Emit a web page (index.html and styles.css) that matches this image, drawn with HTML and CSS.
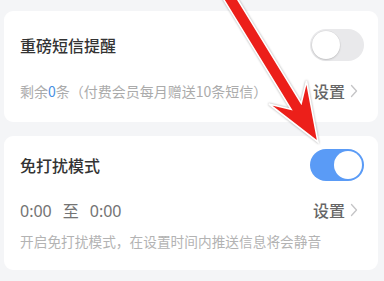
FILE: index.html
```html
<!DOCTYPE html>
<html lang="zh-CN">
<head>
<meta charset="utf-8">
<title>提醒设置</title>
<link rel="stylesheet" href="styles.css">
</head>
<body>
<div class="page">
  <section class="card card-sms">
    <div class="row head">
      <span class="title">重磅短信提醒</span>
      <span class="switch"><span class="knob"></span></span>
    </div>
    <div class="row sub">
      <span class="note">剩余<em class="num">0</em>条（付费会员每月赠送10条短信）</span>
      <span class="link">设置<svg class="chev" width="8" height="14" viewBox="0 0 8 14"><path d="M1.5 1.5 L6.5 7 L1.5 12.5" fill="none" stroke="#c4c4c6" stroke-width="1.3" stroke-linecap="round" stroke-linejoin="round"/></svg></span>
    </div>
  </section>
  <section class="card card-dnd">
    <div class="row head">
      <span class="title">免打扰模式</span>
      <span class="switch on"><span class="knob"></span></span>
    </div>
    <div class="row sub">
      <span class="time">0:00<span class="to">至</span>0:00</span>
      <span class="link">设置<svg class="chev" width="8" height="14" viewBox="0 0 8 14"><path d="M1.5 1.5 L6.5 7 L1.5 12.5" fill="none" stroke="#c4c4c6" stroke-width="1.3" stroke-linecap="round" stroke-linejoin="round"/></svg></span>
    </div>
    <p class="desc">开启免打扰模式，在设置时间内推送信息将会静音</p>
  </section>
  <svg class="arrow" width="384" height="281" viewBox="0 0 384 281">
    <polygon points="232.4,-9.1 301.2,103.1 306.5,81 318,142 268.9,104 291.0,109.3 222.2,-2.9" fill="#ec1f1a" stroke="#ffffff" stroke-width="1.6" stroke-linejoin="miter"/>
  </svg>
</div>
</body>
</html>
```
FILE: styles.css
```css
html, body {
  margin: 0;
  padding: 0;
  background: #f4f5f7;
}
body {
  font-family: "Noto Sans CJK SC", "Noto Sans", sans-serif;
  width: 384px;
  height: 281px;
  overflow: hidden;
}
.page {
  position: relative;
  display: flex;
  flex-direction: column;
  gap: 14px;
  padding: 11px 6px 0 4px;
}
.card {
  background: #ffffff;
  border-radius: 9px;
  padding: 0 14px 0 16px;
  display: flex;
  flex-direction: column;
}
.card-sms {
  padding-top: 18px;
  padding-bottom: 20px;
  gap: 19px;
}
.card-dnd {
  padding-top: 13px;
  padding-bottom: 19px;
}
.row {
  display: flex;
  align-items: center;
  justify-content: space-between;
}
.head {
  height: 32px;
}
.sub {
  height: 22px;
}
.card-dnd .sub {
  margin-top: 18px;
}
.title {
  font-size: 16px;
  font-weight: 500;
  color: #333333;
  line-height: 22px;
}
.note {
  font-size: 14px;
  color: #ababab;
  line-height: 22px;
  white-space: nowrap;
}
.num {
  font-style: normal;
  color: #4a90e2;
}
.time {
  font-size: 16px;
  color: #737373;
  line-height: 22px;
  font-family: "Noto Sans", "Noto Sans CJK SC", sans-serif;
}
.to {
  font-family: "Noto Sans CJK SC", sans-serif;
  margin: 0 11px;
}
.link {
  display: flex;
  align-items: center;
  font-size: 16px;
  font-weight: 500;
  color: #666666;
  line-height: 22px;
  padding-right: 6px;
}
.chev {
  margin-left: 5px;
  display: block;
}
.desc {
  margin: 10px 0 0;
  font-size: 13.7px;
  line-height: 20px;
  color: #b3b3b3;
  white-space: nowrap;
}
.switch {
  position: relative;
  width: 54px;
  height: 32px;
  border-radius: 16px;
  background: #e9e9eb;
  flex: none;
}
.switch .knob {
  position: absolute;
  top: 2px;
  left: 2px;
  width: 28px;
  height: 28px;
  border-radius: 50%;
  background: #ffffff;
  box-shadow: 0 1px 2px rgba(0, 0, 0, 0.15), 0 0 0 0.5px rgba(0, 0, 0, 0.06);
}
.switch.on {
  background: #5a9bf6;
}
.switch.on .knob {
  left: 24px;
  box-shadow: none;
}
.arrow {
  position: absolute;
  left: 0;
  top: 0;
  overflow: visible;
  filter: drop-shadow(0 0 1px rgba(0, 0, 0, 0.35));
  pointer-events: none;
}
```
